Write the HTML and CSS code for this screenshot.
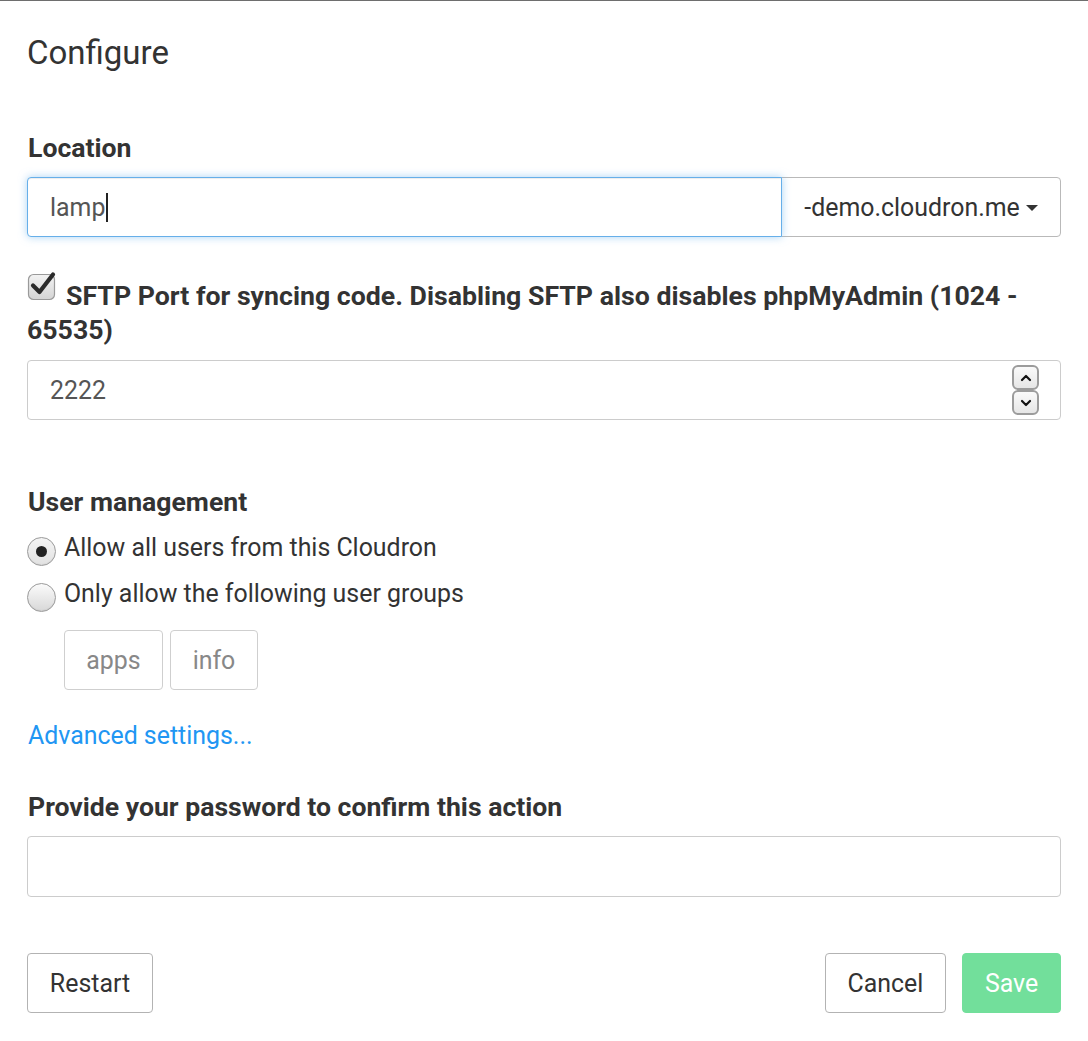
FILE: index.html
```html
<!DOCTYPE html>
<html>
<head>
<meta charset="utf-8">
<link rel="stylesheet" href="styles.css">
</head>
<body>
<div class="modal">
  <h4 class="title">Configure</h4>

  <label class="label lbl-location">Location</label>
  <div class="input-group">
    <div class="input focused"><span>lamp</span><span class="caret-cursor"></span></div>
    <div class="dropdown-btn">-demo.cloudron.me <span class="caret"></span></div>
  </div>

  <div class="check-row"><svg class="checkbox" width="30" height="30" viewBox="0 0 30 30"><defs><linearGradient id="cbg" x1="0" y1="0" x2="0" y2="1"><stop offset="0" stop-color="#f3f3f3"/><stop offset="1" stop-color="#d4d4d4"/></linearGradient></defs><rect x="1.5" y="3.5" width="26" height="25" rx="5" fill="url(#cbg)" stroke="#9a9a9a" stroke-width="1.2"/><path d="M6 14.5 L12.5 21 L26 3.5" fill="none" stroke="#2b2b2b" stroke-width="4.2" stroke-linecap="round" stroke-linejoin="round"/></svg>SFTP Port for syncing code. Disabling SFTP also disables phpMyAdmin (1024 - 65535)</div>

  <div class="input number">
    <span>2222</span>
    <div class="spin">
      <span class="spin-btn">
        <svg width="14" height="10" viewBox="0 0 14 10"><path d="M3 7 L7 3 L11 7" fill="none" stroke="#111" stroke-width="2.2" stroke-linecap="round" stroke-linejoin="round"/></svg>
      </span>
      <span class="spin-btn">
        <svg width="14" height="10" viewBox="0 0 14 10"><path d="M3 3 L7 7 L11 3" fill="none" stroke="#111" stroke-width="2.2" stroke-linecap="round" stroke-linejoin="round"/></svg>
      </span>
    </div>
  </div>

  <label class="label lbl-users">User management</label>
  <div class="radio-row">
    <span class="radio checked"><span class="dot"></span></span>
    <span>Allow all users from this Cloudron</span>
  </div>
  <div class="radio-row">
    <span class="radio"></span>
    <span>Only allow the following user groups</span>
  </div>
  <div class="tags">
    <span class="tag tag-apps">apps</span>
    <span class="tag tag-info">info</span>
  </div>

  <a class="link">Advanced settings...</a>

  <label class="label lbl-pass">Provide your password to confirm this action</label>
  <div class="input pass"></div>

  <div class="footer">
    <button class="btn btn-restart">Restart</button>
    <div class="right">
      <button class="btn btn-cancel">Cancel</button>
      <button class="btn btn-save">Save</button>
    </div>
  </div>
</div>
</body>
</html>
```

FILE: styles.css
```css
* { box-sizing: border-box; }
html, body { margin: 0; padding: 0; background: #fff; }
body {
  font-family: Roboto, "Liberation Sans", sans-serif;
  color: #333;
  font-size: 24.9px;
}
.modal {
  border-top: 1px solid #6e6e6e;
  padding: 0 27px 0 27px;
  height: 1041px;
}
.title {
  margin: 35px 0 0 0;
  font-size: 33px;
  font-weight: 400;
  line-height: 33px;
  color: #333;
}
.label {
  display: block;
  font-weight: 700;
  font-size: 26.6px;
  line-height: 34px;
  padding-left: 1px;
}
.lbl-location { margin-top: 62px; }
.input-group {
  display: flex;
  margin-top: 12px;
  height: 60px;
}
.input {
  border: 1px solid #ccc;
  border-radius: 4px;
  height: 60px;
  padding: 0 22px;
  display: flex;
  align-items: center;
  color: #555;
  font-size: 24.9px;
  background: #fff;
}
.input.focused {
  flex: 0 0 755px;
  border-color: #66afe9;
  border-radius: 4px 0 0 4px;
  box-shadow: inset 0 1px 1px rgba(0,0,0,.075), 0 0 9px rgba(102,175,233,.55);
  position: relative;
  z-index: 1;
}
.caret-cursor {
  display: inline-block;
  width: 2px;
  height: 29px;
  background: #222;
  margin-left: 1px;
}
.dropdown-btn {
  flex: 1;
  margin-left: -1px;
  border: 1px solid #b9b9b9;
  border-radius: 0 4px 4px 0;
  display: flex;
  align-items: center;
  justify-content: center;
  color: #333;
  font-size: 24.9px;
  padding-left: 0;
}
.caret {
  display: inline-block;
  width: 0; height: 0;
  border-left: 6px solid transparent;
  border-right: 6px solid transparent;
  border-top: 6px solid #333;
  margin-left: 6px;
  margin-top: 2px;
}
.check-row {
  margin-top: 42px;
  font-weight: 700;
  font-size: 26.7px;
  line-height: 34px;
}
.checkbox {
  display: inline-block;
  vertical-align: 4px;
  margin-top: -10px;
  margin-right: 9px;
}
.input.number {
  margin-top: 13px;
  justify-content: space-between;
  padding-right: 22px;
}
.spin {
  display: flex;
  flex-direction: column;
  margin-right: -1px;
}
.spin-btn {
  width: 27px;
  height: 25px;
  border: 2px solid #9c9c9c;
  border-radius: 6px;
  background: linear-gradient(#fafafa, #e6e6e6);
  display: flex;
  align-items: center;
  justify-content: center;
}
.lbl-users { margin-top: 65px; }
.radio-row {
  display: flex;
  align-items: center;
  height: 34px;
  line-height: 34px;
  margin-top: 12px;
  color: #333;
}
.radio {
  width: 29px;
  height: 29px;
  border-radius: 50%;
  border: 1px solid #9a9a9a;
  background: linear-gradient(#fbfbfb, #d8d8d8);
  margin-right: 8px;
  margin-top: 6px;
  display: flex;
  align-items: center;
  justify-content: center;
  flex: 0 0 auto;
  box-shadow: inset 0 -1px 1px rgba(0,0,0,.05);
}
.radio.checked { background: linear-gradient(#f4f4f4, #e2e2e2); }
.dot {
  width: 11px; height: 11px; border-radius: 50%; background: #222;
}
.tags {
  display: flex;
  gap: 7px;
  margin-top: 19px;
  padding-left: 37px;
}
.tag {
  height: 60px;
  border: 1px solid #cfcfcf;
  border-radius: 4px;
  display: flex;
  align-items: center;
  justify-content: center;
  color: #888;
}
.tag-apps { width: 99px; }
.tag-info { width: 88px; }
.link {
  display: block;
  margin-top: 29px;
  color: #2196f3;
  line-height: 34px;
  padding-left: 1px;
}
.lbl-pass { margin-top: 37px; }
.input.pass { margin-top: 12px; height: 61px; }
.footer {
  display: flex;
  justify-content: space-between;
  margin-top: 56px;
}
.right { display: flex; gap: 16px; }
.btn {
  height: 60px;
  padding: 0 22px;
  font-family: Roboto, "Liberation Sans", sans-serif;
  font-size: 24.9px;
  color: #333;
  background: #fff;
  border: 1px solid #b3b3b3;
  border-radius: 4px;
}
.btn-restart { width: 126px; padding: 0; }
.btn-cancel { width: 121px; padding: 0; }
.btn-save {
  width: 99px;
  padding: 0;
  background: #72df9b;
  border-color: #72df9b;
  color: #fff;
}
```
